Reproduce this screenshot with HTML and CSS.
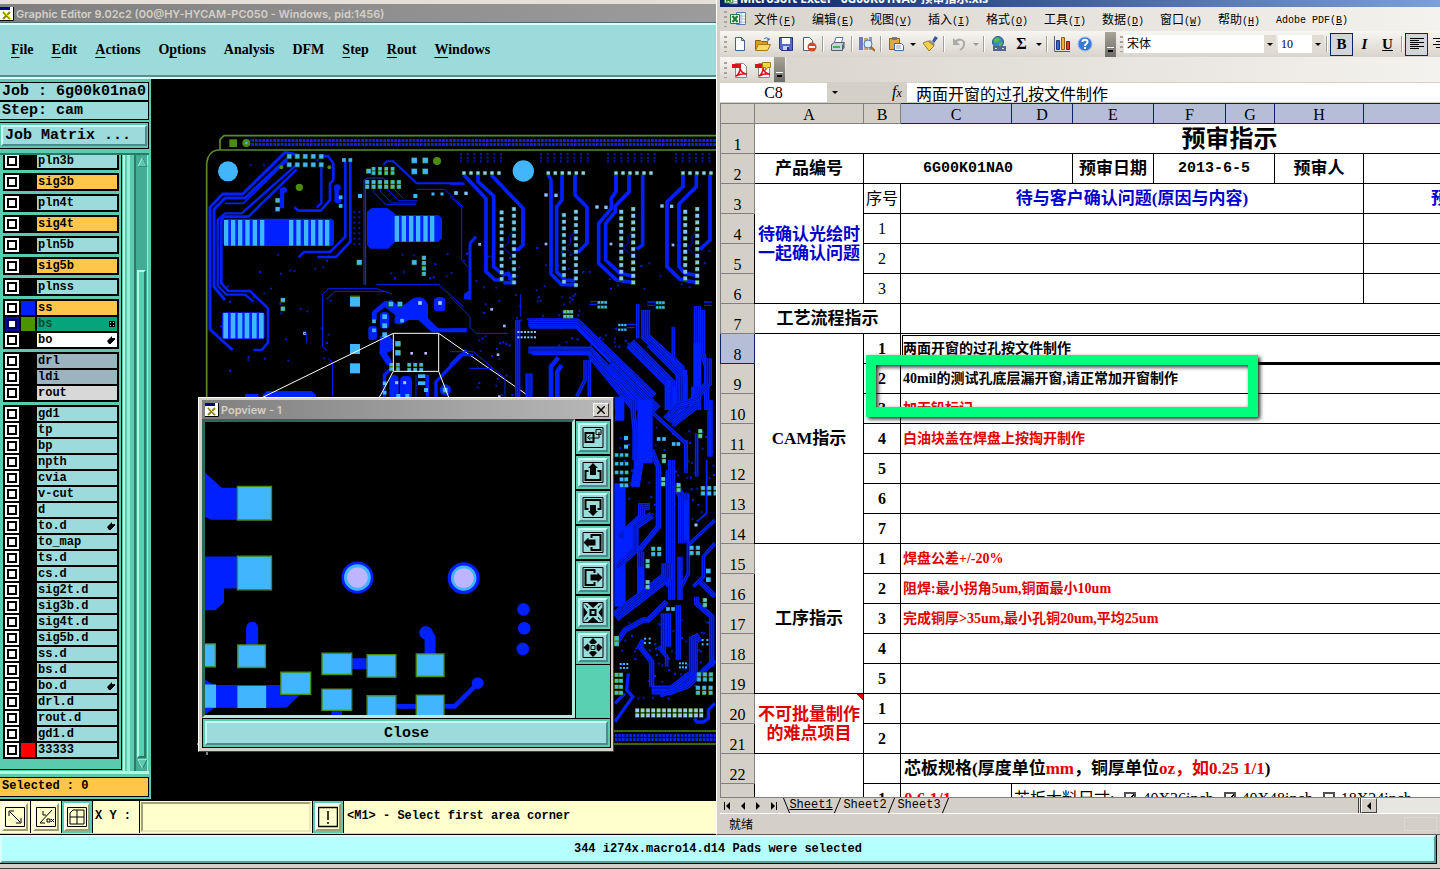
FILE: index.html
```html
<!DOCTYPE html>
<html lang="zh-CN">
<head>
    <meta charset="UTF-8">
    <meta name="viewport" content="width=device-width, initial-scale=1.0">
    <title>Graphic Editor</title>
    <link rel="stylesheet" href="styles.css">
</head>
<body>
    <svg width="0" height="0" class="defs">
        <symbol id="xlogo" viewBox="0 0 14 14"><path fill="#fff" d="M0 0h14v14H0z"/><path fill="#000080" d="M0 0h10v3H0z"/><path d="M3 5l7 7M10 5l-7 7" stroke="#8c8c00" stroke-width="2"/><path d="M4 5l7 7" stroke="#e0e000"/><path d="M13.500 0v13.500H0" stroke="#000" fill="none"/></symbol>
        <symbol id="hand" viewBox="0 0 8 8"><path d="M0 5l2-2 3-3v2h3v2H7v1H6v1H5v1H4v1H2z"/></symbol>
        <symbol id="excel" viewBox="0 0 16 16"><path fill="#fff" stroke="#5a7bb0" d="M6.500 1.500h9v12h-9z"/><path stroke="#9db4d4" d="M11 2v11M7 5h8M7 8h8M7 11h8"/><path fill="#eaf4ea" stroke="#2c7a3a" d="M.5 3.500h9v9h-9z"/><path d="M2.500 5l5 6M7.500 5l-5 6" stroke="#1b7a2c" stroke-width="2"/></symbol>
        <symbol id="pdf" viewBox="0 0 16 16"><path fill="#fff" stroke="#888" d="M3.500 1.500h8l3 3v11h-11z"/><path fill="#d8141c" d="M0 2h9v4H0z"/><path d="M4 14c3-2 4-5 4-8 1 4 3 6 7 6-4-1-7 0-11 2z" fill="none" stroke="#d8141c" stroke-width="1.500"/></symbol>
    </svg>

    <div class="editor">
        <div class="titlebar"><svg class="logo"><use href="#xlogo"/></svg>Graphic Editor 9.02c2 (00@HY-HYCAM-PC050 - Windows, pid:1456)</div>
        <nav class="menubar">
            <a href="#"><u>F</u>ile</a>
            <a href="#"><u>E</u>dit</a>
            <a href="#"><u>A</u>ctions</a>
            <a href="#">O<u>p</u>tions</a>
            <a href="#">Analysis</a>
            <a href="#">DFM</a>
            <a href="#"><u>S</u>tep</a>
            <a href="#"><u>R</u>out</a>
            <a href="#"><u>W</u>indows</a>
        </nav>

        <div class="main">
            <div class="sidebar">
                <div class="info">Job : 6g00k01na0</div>
                <div class="info">Step: cam</div>
                <div class="matrix"><button type="button" class="bevel">Job Matrix ...</button></div>
                <div class="layers">
                    <div class="list">
                        <div class="group"><label><input type="checkbox"><i></i><span>pln3b</span></label></div>
                        <div class="group"><label><input type="checkbox"><i></i><span class="sig">sig3b</span></label></div>
                        <div class="group"><label><input type="checkbox"><i></i><span>pln4t</span></label></div>
                        <div class="group"><label><input type="checkbox"><i></i><span class="sig">sig4t</span></label></div>
                        <div class="group"><label><input type="checkbox"><i></i><span>pln5b</span></label></div>
                        <div class="group"><label><input type="checkbox"><i></i><span class="sig">sig5b</span></label></div>
                        <div class="group"><label><input type="checkbox"><i></i><span>plnss</span></label></div>
                        <div class="group">
                            <label><input type="checkbox"><i class="blue"></i><span class="sig">ss</span></label>
                            <label><input type="checkbox" checked><i class="green"></i><span class="work">bs<svg viewBox="0 0 6 6"><path d="M0 0h6v6H0z"/><path fill="#9fd" d="M1 1h1v1H1zM4 1h1v1H4zM1 4h1v1H1zM4 4h1v1H4z"/></svg></span></label>
                            <label><input type="checkbox"><i></i><span class="doc">bo<svg><use href="#hand"/></svg></span></label>
                        </div>
                        <div class="group">
                            <label><input type="checkbox"><i></i><span class="drill">drl</span></label>
                            <label><input type="checkbox"><i></i><span class="drill">ldi</span></label>
                            <label><input type="checkbox"><i></i><span class="rout">rout</span></label>
                        </div>
                        <div class="group">
                            <label><input type="checkbox"><i></i><span>gd1</span></label>
                            <label><input type="checkbox"><i></i><span>tp</span></label>
                            <label><input type="checkbox"><i></i><span>bp</span></label>
                            <label><input type="checkbox"><i></i><span>npth</span></label>
                            <label><input type="checkbox"><i></i><span>cvia</span></label>
                            <label><input type="checkbox"><i></i><span>v-cut</span></label>
                            <label><input type="checkbox"><i></i><span>d</span></label>
                            <label><input type="checkbox"><i></i><span>to.d<svg><use href="#hand"/></svg></span></label>
                            <label><input type="checkbox"><i></i><span>to_map</span></label>
                            <label><input type="checkbox"><i></i><span>ts.d</span></label>
                            <label><input type="checkbox"><i></i><span>cs.d</span></label>
                            <label><input type="checkbox"><i></i><span>sig2t.d</span></label>
                            <label><input type="checkbox"><i></i><span>sig3b.d</span></label>
                            <label><input type="checkbox"><i></i><span>sig4t.d</span></label>
                            <label><input type="checkbox"><i></i><span>sig5b.d</span></label>
                            <label><input type="checkbox"><i></i><span>ss.d</span></label>
                            <label><input type="checkbox"><i></i><span>bs.d</span></label>
                            <label><input type="checkbox"><i></i><span>bo.d<svg><use href="#hand"/></svg></span></label>
                            <label><input type="checkbox"><i></i><span>drl.d</span></label>
                            <label><input type="checkbox"><i></i><span>rout.d</span></label>
                            <label><input type="checkbox"><i></i><span>gd1.d</span></label>
                            <label><input type="checkbox"><i class="red"></i><span>33333</span></label>
                        </div>
                    </div>
                    <div class="rail"></div>
                    <div class="scroll">
                        <svg viewBox="0 0 12 12"><path d="M6 1l5 10H1z" fill="#5acbae" stroke="#b5f5e2"/><path d="M6 1l5 10H1" fill="none" stroke="#2a7a68"/></svg>
                        <div class="thumb"></div>
                        <svg viewBox="0 0 12 12"><path d="M6 11L1 1h10z" fill="#5acbae" stroke="#2a7a68"/><path d="M11 1H1l5 10" fill="none" stroke="#b5f5e2"/></svg>
                    </div>
                </div>
                <div class="selected">Selected : 0</div>
            </div>
            <svg class="board" id="board" viewBox="151 79 565 722" width="565" height="722"></svg>
        </div>

        <div class="command">
            <button type="button" class="tool" aria-label="Diagonal"><svg viewBox="0 0 20 20"><path d="M.5.5h19v19H.5zM5 5l10 10M4 9V4h5M16 11v5h-5"/></svg></button>
            <button type="button" class="tool" aria-label="Angle"><svg viewBox="0 0 20 20"><path d="M.5.5h19v19H.5zM4 16L16 3M4 16h5M7 4v4h3M11 12h3v3h-3zM15 12l3 3M18 12l-3 3"/></svg></button>
            <button type="button" class="tool on" aria-label="Grid"><svg viewBox="0 0 20 20"><path d="M.5.5h19v19H.5zM3 17V6l3-3h11v14zM10 3v14M3 10h14"/></svg></button>
            <label class="xy" for="xy">X Y :</label>
            <input type="text" id="xy" class="xyinput">
            <button type="button" class="tool on" aria-label="Alert"><svg viewBox="0 0 20 20"><path d="M.5.5h19v19H.5zM10 4v9M10 15v2" stroke-width="1.500"/></svg></button>
            <div class="message">&lt;M1&gt; - Select first area corner</div>
        </div>
        <div class="status">344 i274x.macro14.d14 Pads were selected</div>
    </div>

    <div class="popview">
        <div class="titlebar"><svg class="logo"><use href="#xlogo"/></svg>Popview - 1<button type="button" class="x" aria-label="Close window"><svg viewBox="0 0 8 8"><path d="M0 0l8 8M8 0L0 8" stroke="#000" stroke-width="1.500"/></svg></button></div>
        <div class="popbody">
            <svg class="popcanvas" viewBox="30 84 1098 882" preserveAspectRatio="none">
                <path fill="#0020ff" d="M30 236l50 46h50v96H48l-18-8zM30 489h100v96H87v42l-26 24H30zM153 755v-52a18 18 0 0 1 36 0v52zM470 795h46v33h-46zM687 782v-44a20 20 0 1 1 22-28l11 20v52zM602 933h60v14h-60zM746 933h28l62-62 10 10-66 66h-34zM60 876h200v-6l60 30-46 44H60zM30 860l35 20v60l-35 25zM408 953h32v14h-32z"/>
                <g fill="#0020ff"><circle cx="486" cy="552" r="48"/><circle cx="804" cy="554" r="48"/><circle cx="983" cy="648" r="19"/><circle cx="985" cy="705" r="19"/><circle cx="981" cy="767" r="19"/><circle cx="846" cy="870" r="18"/></g>
                <g fill="#42b5ff"><circle cx="486" cy="552" r="40"/><circle cx="804" cy="554" r="38"/></g>
                <g fill="#bdb5ff"><circle cx="486" cy="552" r="31"/><circle cx="804" cy="554" r="30"/></g>
                <g fill="#42b5ff" stroke="#4a8c10" stroke-width="4">
                    <path d="M127 278h102v101H127zM127 488h102v101H127zM20 752h41v69H20zM128 755h83v68h-83zM257 837h89v67h-89zM380 780h89v64h-89zM515 784h86v68h-86zM662 782h83v68h-83zM380 888h89v64h-89zM515 908h86v70h-86zM662 906h83v70h-83z"/>
                </g>
                <path fill="#42b5ff" d="M30 874h33v70H30zM127 878h86v67h-86z"/>
            </svg>
            <div class="poptools">
                <button type="button" aria-label="Pop area"><svg viewBox="0 0 21 21"><path d="M.5.5h20v20H.500z"/><path stroke-width="2" d="M3 6h8v9H3z"/><path d="M13.500 2.500h5v5h-5zM16.500 5v6H6M8 8l-3 2.500 3 2.500"/></svg></button>
                <button type="button" aria-label="Pan up"><svg viewBox="0 0 21 21"><path d="M.5.5h20v20H.500z"/><path stroke-width="2" d="M6 9H3v9h15V9h-3"/><path class="f" d="M10.500 1l5 5h-2v7h-6V6h-2z"/></svg></button>
                <button type="button" aria-label="Pan down"><svg viewBox="0 0 21 21"><path d="M.5.5h20v20H.500z"/><path stroke-width="2" d="M6 12H3V3h15v9h-3"/><path class="f" d="M10.500 19l5-5h-2V8h-6v6h-2z"/></svg></button>
                <button type="button" aria-label="Pan left"><svg viewBox="0 0 21 21"><path d="M.5.5h20v20H.500z"/><path stroke-width="2" d="M9 6V3h9v15H9v-3"/><path class="f" d="M1 10.500l5-5v2h7v6H6v2z"/></svg></button>
                <button type="button" aria-label="Pan right"><svg viewBox="0 0 21 21"><path d="M.5.5h20v20H.500z"/><path stroke-width="2" d="M12 6V3H3v15h9v-3"/><path class="f" d="M20 10.500l-5-5v2H8v6h7v2z"/></svg></button>
                <button type="button" aria-label="Zoom in"><svg viewBox="0 0 21 21"><path d="M.5.5h20v20H.500z"/><path stroke-width="2" d="M8 8h5v5H8z"/><path class="f" d="M5 1h11l-5.500 5zM5 20h11l-5.500-5zM1 5v11l4-5.500zM20 5v11l-4-5.500zM1 1l5 4-1 1zM20 1l-5 4 1 1zM1 20l5-4-1-1zM20 20l-5-4 1-1z"/></svg></button>
                <button type="button" aria-label="Zoom out"><svg viewBox="0 0 21 21"><path d="M.5.5h20v20H.500z"/><path stroke-width="1" d="M8.500 8.500h4v4h-4z"/><path class="f" d="M10.500 1l4 4-2 2h-4l-2-2zM10.500 20l4-4-2-2h-4l-2 2zM1 10.500l4-4 2 2v4l-2 2zM20 10.500l-4-4-2 2v4l2 2z"/></svg></button>
            </div>
        </div>
        <div class="popclose"><button type="button" class="bevel">Close</button></div>
    </div>

    <div class="excel">
        <div class="xltitle"><svg class="logo"><use href="#excel"/></svg>Microsoft Excel - 6G00K01NA0-预审指示.xls</div>
        <nav class="xlmenu">
            <span class="grip"></span>
            <svg class="logo"><use href="#excel"/></svg>
            <a href="#">文件<span>(<u>F</u>)</span></a>
            <a href="#">编辑<span>(<u>E</u>)</span></a>
            <a href="#">视图<span>(<u>V</u>)</span></a>
            <a href="#">插入<span>(<u>I</u>)</span></a>
            <a href="#">格式<span>(<u>O</u>)</span></a>
            <a href="#">工具<span>(<u>T</u>)</span></a>
            <a href="#">数据<span>(<u>D</u>)</span></a>
            <a href="#">窗口<span>(<u>W</u>)</span></a>
            <a href="#">帮助<span>(<u>H</u>)</span></a>
            <a href="#"><span>Adobe PDF(<u>B</u>)</span></a>
        </nav>
        <div class="toolbar">
            <span class="grip"></span>
            <button type="button" aria-label="新建"><svg viewBox="0 0 16 16"><path fill="#fff" stroke="#46608c" d="M3.500 1.500h6l3 3v10h-9z"/><path fill="#b8cbe8" stroke="#46608c" d="M9.500 1.500v3h3z"/></svg></button>
            <button type="button" aria-label="打开"><svg viewBox="0 0 16 16"><path fill="#d89c28" stroke="#8a6010" d="M.5 13.500v-9h5l1 1h6v3"/><path fill="#ffd868" stroke="#a87818" d="M.5 14.500l3-6h12l-3 6z"/><path fill="none" stroke="#2c58a8" d="M9 3c2-2 4-1 5 1M12 4h2V2"/></svg></button>
            <button type="button" aria-label="保存"><svg viewBox="0 0 16 16"><path fill="#5868c8" stroke="#283080" d="M1.500 1.500h13v13h-11l-2-2z"/><path fill="#fff" d="M4 2h8v6H4z"/><path fill="#c8d0f0" d="M5 10h6v4H5z"/><path fill="#283080" d="M9 11h2v3H9z"/></svg></button>
            <button type="button" aria-label="权限"><svg viewBox="0 0 16 16"><path fill="#fff" stroke="#46608c" d="M2.500 1.500h6l3 3v10h-9z"/><circle cx="11" cy="11" r="4.500" fill="#d84820"/><path fill="#fff" d="M8 10h6v2H8z"/></svg></button>
            <span class="sep"></span>
            <button type="button" aria-label="打印"><svg viewBox="0 0 16 16"><path fill="#fff" stroke="#5878a8" d="M6 1.500h7l-2 6H4z"/><path fill="#c8d4dc" stroke="#506070" d="M1.500 8.500l3-2h10l-2 3v5h-11z"/><path fill="#48b058" d="M3 10h7v2H3z"/><path fill="#506878" d="M12.500 9l2-2v5l-2 2z"/></svg></button>
            <span class="sep"></span>
            <button type="button" aria-label="信息检索"><svg viewBox="0 0 16 16"><path fill="#6c7cc0" d="M0 1h4v13H0z"/><path fill="#c8a868" d="M5 2h4v12H5z"/><path fill="#9098c8" d="M10 1h3v13h-3z"/><circle cx="9" cy="8" r="4" fill="#d8f0ff" stroke="#5078a0"/><path d="M12 11l4 4" stroke="#a06820" stroke-width="2"/></svg></button>
            <span class="sep"></span>
            <button type="button" aria-label="粘贴"><svg viewBox="0 0 16 16"><path fill="#e0a840" stroke="#906010" d="M1.500 2.500h10v11h-10z"/><path fill="#787878" d="M4 1h5v3H4z"/><path fill="#fff" stroke="#4868a0" d="M6.500 7.500h7l2 2v5h-9z"/><path stroke="#88a0c8" d="M8 10h5M8 12h5"/></svg></button>
            <button type="button" class="drop" aria-label="粘贴选项"></button>
            <button type="button" aria-label="格式刷"><svg viewBox="0 0 16 16"><path fill="#3858a0" d="M13 0l3 2-4 5-2-2z"/><path fill="#909090" d="M8 4l5 4-1 2-6-5z"/><path fill="#f0d050" stroke="#a08020" d="M6 5l6 5-5 5-6-8z"/></svg></button>
            <span class="sep"></span>
            <button type="button" aria-label="撤消"><svg viewBox="0 0 16 16"><path fill="none" stroke="#aaa" stroke-width="2" d="M3 7c5-6 11-3 10 2 0 3-3 4-4 5"/><path fill="#aaa" d="M2 2v7h7z"/></svg></button>
            <button type="button" class="drop off" aria-label="撤消列表"></button>
            <span class="sep"></span>
            <button type="button" aria-label="超链接"><svg viewBox="0 0 16 16"><circle cx="7" cy="6" r="5.500" fill="#3888c8" stroke="#205890"/><path fill="#58b848" d="M3 3l4-2 2 3-3 3-3-1zM8 7l4-1-2 4H8z"/><path fill="none" stroke="#506890" stroke-width="2" d="M3 11h4v3H3zM9 11h5v3H9zM6 12.500h5"/></svg></button>
            <button type="button" class="sum" aria-label="自动求和">Σ</button>
            <button type="button" class="drop" aria-label="求和选项"></button>
            <span class="sep"></span>
            <button type="button" aria-label="图表"><svg viewBox="0 0 16 16"><path fill="none" stroke="#506080" d="M.5 0v15.500H16"/><path fill="#3868c8" stroke="#203c80" d="M2.500 4.500h3v9h-3z"/><path fill="#f0b030" stroke="#906010" d="M7.500 1.500h3v12h-3z"/><path fill="#d84028" stroke="#801c10" d="M12.500 5.500h3v8h-3z"/></svg></button>
            <button type="button" aria-label="帮助"><svg viewBox="0 0 16 16"><circle cx="8" cy="8" r="7" fill="#3878d8" stroke="#9cc0f0"/><path fill="none" stroke="#fff" stroke-width="2" d="M5.500 6c0-3 5-3 5 0 0 2-2.500 1.500-2.500 4M8 11v2"/></svg></button>
            <button type="button" class="more wide" aria-label="工具栏选项"></button>
            <span class="grip"></span>
            <span class="combo font"><select aria-label="字体"><option>宋体</option></select></span>
            <span class="combo size"><select aria-label="字号"><option>10</option></select></span>
            <span class="sep"></span>
            <button type="button" class="fmt pressed"><b>B</b></button>
            <button type="button" class="fmt"><em>I</em></button>
            <button type="button" class="fmt"><u>U</u></button>
            <span class="sep"></span>
            <button type="button" class="fmt pressed" aria-label="左对齐"><svg viewBox="0 0 16 16"><path stroke="#000" d="M1 2.500h14M1 4.500h9M1 6.500h14M1 8.500h9M1 10.500h14M1 12.500h9"/></svg></button>
            <button type="button" class="fmt" aria-label="居中"><svg viewBox="0 0 16 16"><path stroke="#000" d="M1 2.500h14M4 5.500h8M1 8.500h14M4 11.500h8"/></svg></button>
        </div>
        <div class="pdfrow">
            <div class="toolbar short">
                <span class="grip"></span>
                <button type="button" aria-label="转换为 PDF"><svg><use href="#pdf"/></svg></button>
                <button type="button" aria-label="转换并注释"><svg viewBox="0 0 16 16"><use href="#pdf"/><path fill="#f8d838" stroke="#a08010" d="M7.500.500h8v5h-3l-2 3v-3h-3z"/></svg></button>
                <button type="button" class="more" aria-label="工具栏选项"></button>
            </div>
        </div>
        <div class="formula">
            <input type="text" class="name" value="C8" aria-label="名称框">
            <button type="button" class="drop" aria-label="名称列表"></button>
            <em class="fx">f<small>x</small></em>
            <input type="text" class="value" value="两面开窗的过孔按文件制作" aria-label="编辑栏">
        </div>

        <div class="sheet">
            <table>
                <colgroup><col class="rh"><col class="a"><col class="b"><col class="c"><col class="d"><col class="e"><col class="f"><col class="g"><col class="h"><col class="i"></colgroup>
                <tr class="head"><th></th><th>A</th><th>B</th><th class="on">C</th><th class="on">D</th><th class="on">E</th><th class="on">F</th><th class="on">G</th><th class="on">H</th><th class="on"></th></tr>
                <tr><th>1</th><td colspan="9" class="title">预审指示</td></tr>
                <tr><th>2</th><td class="label">产品编号</td><td colspan="3" class="code">6G00K01NA0</td><td class="label">预审日期</td><td colspan="2" class="code">2013-6-5</td><td class="label">预审人</td><td></td></tr>
                <tr><th>3</th><td rowspan="4" class="label blue">待确认光绘时<br>一起确认问题</td><td class="no">序号</td><td colspan="6" class="label blue">待与客户确认问题(原因与内容)</td><td class="label blue next">预</td></tr>
                <tr><th>4</th><td class="no">1</td><td colspan="6"></td><td></td></tr>
                <tr><th>5</th><td class="no">2</td><td colspan="6"></td><td></td></tr>
                <tr><th>6</th><td class="no">3</td><td colspan="6"></td><td></td></tr>
                <tr><th>7</th><td colspan="2" class="label">工艺流程指示</td><td colspan="7"></td></tr>
                <tr><th class="on">8</th><td rowspan="7" class="label">CAM指示</td><td class="no bold">1</td><td colspan="7" class="note current">两面开窗的过孔按文件制作</td></tr>
                <tr><th>9</th><td class="no bold">2</td><td colspan="7" class="note">40mil的测试孔底层漏开窗,请正常加开窗制作</td></tr>
                <tr><th>10</th><td class="no bold">3</td><td colspan="7" class="note red">加无铅标记</td></tr>
                <tr><th>11</th><td class="no bold">4</td><td colspan="7" class="note red">白油块盖在焊盘上按掏开制作</td></tr>
                <tr><th>12</th><td class="no bold">5</td><td colspan="7"></td></tr>
                <tr><th>13</th><td class="no bold">6</td><td colspan="7"></td></tr>
                <tr><th>14</th><td class="no bold">7</td><td colspan="7"></td></tr>
                <tr><th>15</th><td rowspan="5" class="label">工序指示</td><td class="no bold">1</td><td colspan="7" class="note red">焊盘公差+/-20%</td></tr>
                <tr><th>16</th><td class="no bold">2</td><td colspan="7" class="note red">阻焊:最小拐角5um,铜面最小10um</td></tr>
                <tr><th>17</th><td class="no bold">3</td><td colspan="7" class="note red">完成铜厚&gt;35um,最小孔铜20um,平均25um</td></tr>
                <tr><th>18</th><td class="no bold">4</td><td colspan="7"></td></tr>
                <tr><th>19</th><td class="no bold">5</td><td colspan="7"></td></tr>
                <tr><th>20</th><td rowspan="2" class="label red comment">不可批量制作<br>的难点项目</td><td class="no bold">1</td><td colspan="7"></td></tr>
                <tr><th>21</th><td class="no bold">2</td><td colspan="7"></td></tr>
                <tr><th>22</th><td rowspan="2"></td><td></td><td colspan="7" class="spec">芯板规格(厚度单位<span class="red">mm</span>，铜厚单位<span class="red">oz，如0.25 1/1</span>)</td></tr>
                <tr><th></th><td class="no bold">1</td><td class="spec red">0.6 1/1</td><td colspan="6" class="sizes">芯板大料尺寸:
                    <label><input type="checkbox" checked>40X36inch</label>
                    <label><input type="checkbox" checked>40X48inch</label>
                    <label><input type="checkbox">18X24inch</label></td></tr>
            </table>
        </div>

        <div class="tabs">
            <button type="button" class="nav" aria-label="第一张"><svg viewBox="0 0 8 8"><path d="M0 0h1v8H0zM6 0v8L2 4z"/></svg></button>
            <button type="button" class="nav" aria-label="上一张"><svg viewBox="0 0 8 8"><path d="M6 0v8L2 4z"/></svg></button>
            <button type="button" class="nav" aria-label="下一张"><svg viewBox="0 0 8 8"><path d="M2 0v8l4-4z"/></svg></button>
            <button type="button" class="nav" aria-label="最后一张"><svg viewBox="0 0 8 8"><path d="M2 0v8l4-4zM7 0h1v8H7z"/></svg></button>
            <button type="button" class="tab active">Sheet1</button>
            <button type="button" class="tab">Sheet2</button>
            <button type="button" class="tab">Sheet3</button>
            <div class="hscroll"><button type="button" aria-label="向左滚动"><svg viewBox="0 0 8 8"><path d="M6 0v8L2 4z"/></svg></button></div>
        </div>
        <div class="xlstatus"><span>就绪</span><i></i></div>
    </div>

    <div class="marker"></div>

    <script src="board.js"></script>
</body>
</html>
```

FILE: styles.css
```css
* {
    box-sizing: border-box;
}
body {
    margin: 0;
    height: 100vh;
    overflow: hidden;
    position: relative;
    background-color: #000;
    font-family: "Liberation Mono", monospace;
    font-size: 12px;
    color: #000;
}
a {
    color: inherit;
    text-decoration: none;
}
button, input, select {
    font: inherit;
    color: inherit;
    border: 0;
    padding: 0;
    margin: 0;
    border-radius: 0;
    background: none;
}
svg {
    display: block;
}
.defs {
    position: absolute;
}
.logo {
    width: 14px;
    height: 14px;
    flex: none;
    margin-right: 2px;
}

/* graphic editor */
.editor {
    height: 100%;
    display: flex;
    flex-direction: column;
    border-top: 4px solid #e4e0d8;
    border-bottom: 1px solid #404040;
    background-color: #d4d0c8;
}
.titlebar {
    flex: none;
    display: flex;
    align-items: center;
    height: 19px;
    font: 600 11px Inter, "Noto Sans", sans-serif;
    color: #d4d0c8;
    background: linear-gradient(90deg, #808080, #b8b8b8);
}
.menubar {
    flex: none;
    display: flex;
    align-items: center;
    gap: 18px;
    height: 56px;
    padding: 0 0 3px 11px;
    font: bold 14px "Liberation Serif", serif;
    background-color: #9cdbdb;
    border-top: 2px solid #d8ffff;
    border-bottom: 2px solid #d8ffff;
    box-shadow: inset 0 -2px #5a8c8c, 0 -1px #4a6c6c;
}
.menubar u {
    text-underline-offset: 3px;
}
.main {
    flex: 1;
    min-height: 0;
    display: flex;
    background-color: #000;
}
.sidebar {
    width: 151px;
    flex: none;
    display: flex;
    flex-direction: column;
    padding: 3px 2px 2px 0;
    margin-bottom: 2px;
    background-color: #5acbae;
}
.info {
    height: 19px;
    padding-left: 2px;
    font-size: 15px;
    line-height: 17px;
    font-weight: bold;
    white-space: nowrap;
    background-color: #9cdbdb;
    border: 1px solid #000;
    border-left: 0;
}
.matrix {
    margin: 2px 0 4px;
    padding: 2px 1px;
    height: 27px;
    border: 1px solid #000;
    border-left: 0;
}
.bevel {
    display: block;
    width: 100%;
    height: 100%;
    font-size: 15px;
    font-weight: bold;
    background-color: #9cdbdb;
    border: 2px solid;
    border-color: #c8fff4 #4a8c8c #4a8c8c #c8fff4;
}
.matrix .bevel {
    text-align: left;
    padding-left: 2px;
    line-height: 17px;
}
.layers {
    flex: 1;
    min-height: 0;
    display: flex;
    border-top: 2px solid #2a7a68;
    border-bottom: 3px solid #b5f5e2;
}
.list {
    width: 122px;
    display: flex;
    flex-direction: column;
    justify-content: flex-end;
    gap: 3px;
    padding: 0 2px 10px 3px;
    margin-bottom: 1px;
    overflow: hidden;
    border-right: 1px solid #000;
    border-bottom: 1px solid #000;
}
.group {
    flex: none;
    display: flex;
    flex-direction: column;
    gap: 2px;
    padding: 2px;
    background-color: #000;
}
.group label {
    display: flex;
    gap: 2px;
    height: 14px;
}
.group input {
    appearance: none;
    width: 14px;
    height: 14px;
    background-color: #fff;
    border: 2px solid #fff;
    box-shadow: inset 0 0 0 2px #000;
}
.group input:checked {
    border-color: #0808a0;
    box-shadow: inset 0 0 0 2px #000060;
}
.group i {
    width: 14px;
    background-color: #000;
}
.group i.blue {
    background-color: #0020ff;
}
.group i.green {
    background-color: #4a9400;
}
.group i.red {
    background-color: #f00;
}
.group span {
    flex: 1;
    display: flex;
    align-items: center;
    justify-content: space-between;
    padding: 0 2px 0 1px;
    line-height: 14px;
    font-weight: bold;
    background-color: #9cdbdb;
}
.group svg {
    width: 8px;
    height: 8px;
}
.group .sig {
    background-color: #ffc64a;
}
.group .work {
    color: #044a30;
    background-color: #04a57b;
}
.group .work svg {
    width: 6px;
    height: 6px;
}
.group .doc {
    background-color: #fff;
}
.group .drill {
    background-color: #9cb4bd;
}
.group .rout {
    background-color: #d8d8d8;
}
.rail {
    width: 7px;
    margin: 0 4px 0 1px;
    border-left: 2px solid #b5f5e2;
    border-right: 3px solid #9cebd6;
}
.scroll {
    width: 14px;
    display: flex;
    flex-direction: column;
    padding: 1px;
    background-color: #42ad94;
    border-left: 2px solid #2a7a68;
    border-right: 1px solid #9cebd6;
}
.scroll svg {
    width: 11px;
    height: 12px;
    flex: none;
}
.scroll .thumb {
    flex: 1;
    margin-top: 102px;
    background-color: #5ad0b2;
    border: 2px solid;
    border-color: #b5f5e2 #2a7a68 #2a7a68 #b5f5e2;
}
.selected {
    flex: none;
    height: 20px;
    margin-top: 3px;
    padding-left: 2px;
    line-height: 17px;
    font-weight: bold;
    background-color: #ffc64a;
    border: 1px solid #000;
    border-left: 0;
}
.board {
    flex: none;
    background-color: #000;
}
.command {
    flex: none;
    display: flex;
    gap: 1px;
    height: 32px;
    font-weight: bold;
    background-color: #000;
}
.tool {
    width: 30px;
    padding: 2px;
    background-color: #ffffce;
}
.tool svg {
    width: 100%;
    height: 100%;
    padding: 1px;
    fill: none;
    stroke: #000;
    background-color: #ffffce;
    border: 2px solid;
    border-color: #fff #9c9c7b #9c9c7b #fff;
}
.tool.on {
    background-color: #5acbae;
}
.xy {
    width: 46px;
    padding-left: 2px;
    line-height: 31px;
    background-color: #ffffce;
}
.xyinput {
    width: 172px;
    background-color: #ffffce;
    border: 3px solid;
    border-color: #a0a080 #e8e8b8 #e8e8b8 #a0a080;
    outline: 1px solid #ffffce;
    outline-offset: -1px;
}
.message {
    flex: 1;
    padding-left: 3px;
    line-height: 31px;
    background-color: #ffffce;
}
.status {
    flex: none;
    height: 28px;
    margin: 2px 4px 5px 0;
    line-height: 24px;
    text-align: center;
    font-weight: bold;
    background-color: #b5ffff;
    border: 2px solid;
    border-color: #d8ffff #5a9c9c #5a9c9c #d8ffff;
    outline: 1px solid #000;
}

/* popview window */
.popview {
    position: absolute;
    left: 198px;
    top: 397px;
    width: 416px;
    height: 355px;
    display: flex;
    flex-direction: column;
    padding: 2px 2px 3px 3px;
    background-color: #d4d0c8;
    border: 1px solid;
    border-color: #fff #404040 #404040 #fff;
}
.x {
    display: flex;
    align-items: center;
    justify-content: center;
    width: 16px;
    height: 14px;
    margin: 0 2px 0 auto;
    background-color: #d4d0c8;
    border: 1px solid;
    border-color: #fff #404040 #404040 #fff;
}
.x svg {
    width: 8px;
    height: 8px;
}
.popview .titlebar {
    padding-left: 3px;
}
.popbody {
    flex: 1;
    min-height: 0;
    display: flex;
    background-color: #000;
}
.popcanvas {
    flex: 1;
    min-width: 0;
    height: 100%;
    background-color: #000;
    border: 3px solid;
    border-color: #2a6a5a #b5ebe0 #b5ebe0 #2a6a5a;
}
.poptools {
    width: 34px;
    display: flex;
    flex-direction: column;
    gap: 2px;
    padding-top: 2px;
    margin: 0 1px;
    background: linear-gradient(#000 246px, #5ad0b2 246px);
}
.poptools button {
    height: 33px;
    padding: 2px;
    background-color: #5acbae;
}
.poptools svg {
    width: 100%;
    height: 100%;
    padding: 2px;
    fill: none;
    stroke: #000;
    background-color: #9cdbdb;
    border: 2px solid;
    border-color: #c8fff4 #4a8c8c #4a8c8c #c8fff4;
}
.poptools .f {
    fill: #000;
    stroke: none;
}
.popclose {
    flex: none;
    height: 30px;
    padding: 2px;
    background-color: #5acbae;
    border: 1px solid #000;
}

/* excel window */
.excel {
    position: absolute;
    left: 716px;
    right: 0;
    top: -13px;
    height: 848px;
    display: flex;
    flex-direction: column;
    padding-left: 3px;
    overflow: hidden;
    font: 12px "Liberation Serif", "Noto Sans CJK SC", serif;
    background-color: #d4d0c8;
    border-left: 1px solid #fff;
    border-bottom: 1px solid #606060;
}
.xltitle {
    flex: none;
    display: flex;
    align-items: center;
    height: 20px;
    padding: 4px 0 0 4px;
    font: bold 12px/16px "Noto Sans", "Noto Sans CJK SC", sans-serif;
    color: #fff;
    background: linear-gradient(90deg, #0a246a, #7ba0d8);
}
.grip {
    width: 3px;
    height: 16px;
    margin: 0 3px 0 4px;
    flex: none;
    background: repeating-linear-gradient(#a8a498 0 2px, transparent 2px 5px);
}
.xlmenu {
    flex: none;
    display: flex;
    align-items: center;
    height: 24px;
    background: linear-gradient(90deg, #d8d4cc, #f4f2ee);
}
.xlmenu .logo {
    width: 16px;
    height: 16px;
    margin-right: 8px;
}
.xlmenu a {
    flex: none;
    width: 58px;
    white-space: nowrap;
}
.xlmenu span {
    font: 10px "Liberation Mono", monospace;
}
.toolbar {
    flex: none;
    display: flex;
    align-items: center;
    height: 26px;
    background: linear-gradient(#f8f6f2, #d8d4cc);
}
.toolbar .grip {
    margin: 0 1px 0 4px;
}
.toolbar button {
    width: 23px;
    height: 23px;
    flex: none;
    display: flex;
    align-items: center;
    justify-content: center;
}
.toolbar svg {
    width: 16px;
    height: 16px;
}
.sep {
    flex: none;
    width: 2px;
    height: 16px;
    margin: 0 2px;
    border-left: 1px solid #a0a098;
    border-right: 1px solid #fff;
}
.toolbar .drop {
    width: 11px;
}
.drop::after, .combo::after {
    content: "";
    border: 3px solid transparent;
    border-top-color: #000;
    border-bottom: 0;
}
.drop.off::after {
    border-top-color: #999;
}
.toolbar .sum {
    font-size: 16px;
    font-weight: bold;
}
.toolbar .more {
    width: 11px;
    height: 25px;
    align-items: flex-end;
    padding-bottom: 3px;
    background: linear-gradient(#a8a498, #6c6c68);
}
.toolbar .more.wide {
    margin-left: 9px;
}
.more::after {
    content: "";
    width: 7px;
    height: 6px;
    border-top: 1px solid #fff;
    background: linear-gradient(#000, #000) center 2px / 5px 2px no-repeat;
}
.combo {
    flex: none;
    display: flex;
    align-items: center;
    height: 18px;
    padding-right: 3px;
    background: linear-gradient(90deg, #fff calc(100% - 12px), #e0dcd4 calc(100% - 12px));
}
.combo select {
    appearance: none;
    flex: 1;
    height: 18px;
    padding-left: 3px;
}
.combo.font {
    width: 152px;
    margin-right: 2px;
}
.combo.size {
    width: 46px;
}
.toolbar .fmt {
    font-size: 15px;
    font-weight: bold;
}
.toolbar .pressed {
    background-color: #d4d5d8;
    border: 1px solid #0a246a;
}
.pdfrow {
    flex: none;
    height: 25px;
    background: linear-gradient(90deg, #d8d4cc, #f4f2ee);
}
.toolbar.short {
    width: 66px;
    height: 25px;
}
.formula {
    flex: none;
    display: flex;
    align-items: center;
    height: 21px;
    font-size: 16px;
}
.formula .name {
    width: 107px;
    height: 19px;
    text-align: center;
    background-color: #fff;
}
.formula .drop {
    display: flex;
    width: 15px;
    justify-content: center;
}
.fx {
    margin: 0 0 0 50px;
    width: 15px;
    line-height: 19px;
}
.fx small {
    font-size: 12px;
}
.formula .value {
    flex: 1;
    min-width: 0;
    height: 19px;
    padding-left: 9px;
    background-color: #fff;
}
.sheet {
    flex: 1;
    min-height: 0;
    overflow: hidden;
    background-color: #fff;
}
table {
    width: 984px;
    table-layout: fixed;
    border-collapse: collapse;
}
tr {
    height: 30px;
}
th, td {
    height: 30px;
    padding: 0;
    overflow: hidden;
    white-space: nowrap;
    border: 1px solid #000;
}
th {
    line-height: 16px;
    font-size: 16px;
    font-weight: normal;
    vertical-align: bottom;
    background-color: #d4d0c8;
    border: 1px solid #808080;
}
.head, .head th {
    height: 20px;
}
th.on {
    background-color: #b5bed6;
    border-color: #0a246a;
}
.rh {
    width: 34px;
}
.a {
    width: 109px;
}
.b {
    width: 37px;
}
.c {
    width: 111px;
}
.d {
    width: 61px;
}
.e {
    width: 81px;
}
.f {
    width: 72px;
}
.g {
    width: 49px;
}
.h {
    width: 89px;
}
.i {
    width: 341px;
}
.title {
    font-size: 24px;
    line-height: 26px;
    font-weight: bold;
    text-align: center;
}
.label {
    font-size: 17px;
    line-height: 19px;
    font-weight: bold;
    text-align: center;
}
.code {
    font: bold 15px "Liberation Mono", monospace;
    text-align: center;
}
.no {
    font-size: 16px;
    line-height: 18px;
    text-align: center;
}
.bold {
    font-weight: bold;
}
.note {
    padding-left: 2px;
    font-size: 14px;
    line-height: 18px;
    font-weight: bold;
}
.current {
    outline: 3px double #000;
    outline-offset: -2px;
}
.blue {
    color: #00c;
}
.red {
    color: #e00000;
}
.next {
    text-align: left;
    padding-left: 67px;
}
.comment {
    background: linear-gradient(45deg, transparent 50%, #e00000 50%) right top / 6px 6px no-repeat;
}
.spec {
    padding-left: 3px;
    font-size: 17px;
    line-height: 20px;
    font-weight: bold;
}
.sizes {
    padding-left: 2px;
    font-size: 16px;
    line-height: 20px;
}
.sizes label {
    margin-left: 6px;
}
.sizes input {
    appearance: none;
    width: 12px;
    height: 12px;
    margin-right: 6px;
    border: 2px solid #505050;
    background-color: #fff;
}
.sizes input:checked {
    background: linear-gradient(135deg, #fff 45%, #000 45% 60%, #fff 60%);
}
.tabs {
    flex: none;
    display: flex;
    height: 17px;
    font: 12px/15px "Liberation Mono", monospace;
    border-top: 1px solid #808080;
    border-bottom: 1px solid #fff;
}
.nav {
    width: 15px;
    display: flex;
    align-items: center;
    justify-content: center;
}
.nav svg, .hscroll svg {
    width: 8px;
    height: 8px;
}
.tab {
    width: 54px;
    position: relative;
}
.tab.active {
    margin-left: 4px;
    text-decoration: underline;
}
.tab::after, .tab.active::before {
    content: "";
    position: absolute;
    top: 0;
    right: 0;
    height: 15px;
    border-left: 1px solid #000;
    transform: skewX(-22deg);
}
.tab.active::before {
    left: 2px;
    right: auto;
    transform: skewX(22deg);
}
.hscroll {
    width: 82px;
    margin-left: auto;
    background-color: #e8e6e0;
    border-left: 3px double #404040;
}
.hscroll button {
    display: flex;
    align-items: center;
    justify-content: center;
    width: 16px;
    height: 15px;
    background-color: #d4d0c8;
    border: 1px solid;
    border-color: #fff #404040 #404040 #fff;
}
.xlstatus {
    flex: none;
    display: flex;
    align-items: center;
    justify-content: space-between;
    height: 20px;
    padding: 0 3px 0 9px;
}
.xlstatus i {
    width: 33px;
    height: 14px;
    border: 1px solid #dedad2;
}

/* highlight drawn over the sheet */
.marker {
    position: absolute;
    left: 866px;
    top: 355px;
    width: 392px;
    height: 62px;
    border: 10px solid #00ff7b;
    box-shadow: 2px 2px 4px #222, inset 2px 2px 4px #222;
}
```

FILE: board.js
```javascript
const BLUE = '#0020ff';
const DARK = '#0818a8';
const LIGHT = '#42b5ff';
const GREEN = '#4a8c10';
const board = document.getElementById('board');
let out = '';

function trace(d, w, color) {
    out += `<path d="${d}" fill="none" stroke="${color || BLUE}" stroke-width="${w || 9}"/>`;
}
function shape(d, color) {
    out += `<path d="${d}" fill="${color || BLUE}"/>`;
}
function rect(x, y, w, h, color) {
    out += `<rect x="${x}" y="${y}" width="${w}" height="${h}" fill="${color || BLUE}"/>`;
}
function circle(x, y, r, color) {
    out += `<circle cx="${x}" cy="${y}" r="${r}" fill="${color}"/>`;
}
// n parallel tracks following one centre line
function bundle(d, n, w) {
    w = w || 3;
    for (let k = n; k > 0; k--) {
        const blue = k % 2 === n % 2;
        trace(d, (4 * k - 2) * w / 1.5 + (blue ? 3 : -1), blue ? BLUE : '#000030');
    }
}
function pads(x, y, cols, rows, dx, dy, s, color, ring) {
    for (let r = 0; r < rows; r++) {
        for (let c = 0; c < cols; c++) {
            const px = x + c * dx - s / 2;
            const py = y + r * dy - s / 2;
            if (ring) rect(px - 2, py - 1, s + 3, s + 3, ring);
            rect(px, py, s, s, color || LIGHT);
        }
    }
}
// every view is drawn in thirds of a pixel
function open(x, y) {
    out += `<g transform="translate(${x} ${y}) scale(.33333)">`;
}
function close() {
    out += '</g>';
}
let seed = 7;
function rnd() {
    seed = (seed * 16807) % 2147483647;
    return seed / 2147483647;
}
function vias(x, y, w, h, n) {
    for (let i = 0; i < n; i++) {
        rect(Math.round(x + rnd() * w), Math.round(y + rnd() * h), 6, 6, rnd() > 0.4 ? DARK : BLUE);
    }
}

out += '<defs><pattern id="strip" width="11" height="12" patternUnits="userSpaceOnUse" y="57"><rect width="8" height="9" fill="#0828e0"/></pattern></defs>';

// upper left
open(200, 120);
trace('M60 90V58L72 47H1600M52 90H1600M20 1880V130Q24 94 52 90', 5, '#5a8a32');
rect(150, 57, 1400, 23, 'url(#strip)');
rect(88, 58, 23, 23, GREEN);
circle(139, 69, 12, GREEN);
circle(139, 69, 4, LIGHT);
vias(80, 110, 330, 30, 6);
vias(60, 400, 350, 350, 34);
vias(560, 380, 200, 100, 12);
trace('M295 105L255 97L128 222H68L30 262V628L98 690');
trace('M265 112L135 234H75L42 268V500L75 540');
trace('M290 134L125 280H75L53 300V498L80 524H135L160 545', 7);
trace('M290 148L145 290H72L64 302V490L85 513H150L204 565V668L185 690H160', 8);
trace('M262 122L130 250H75', 5);
trace('M370 108L384 108L400 130V180L390 190V240L362 272H295L283 262', 8);
trace('M364 140V250L350 262', 7);
trace('M436 125V350L390 396H312L296 412', 8);
trace('M451 125V365L408 411H352', 8);
trace('M246 205V265M410 200V245', 13);
circle(252, 210, 9, BLUE);
circle(412, 203, 10, BLUE);
circle(414, 240, 10, BLUE);
out += '<rect x="70" y="296" width="332" height="82" rx="10" fill="#0020ff"/>';
[72, 93, 114, 136, 158, 180, 267, 289, 312, 333, 355, 375].forEach(x => rect(x, 300, 13, 77, LIGHT));
out += '<rect x="66" y="577" width="128" height="80" rx="8" fill="#0020ff"/>';
[70, 92, 113, 134, 156, 177].forEach(x => rect(x, 579, 14, 76, LIGHT));
shape('M501 275L515 264H562L590 285H715L726 295V355L715 366H585L565 386H510L501 375z');
[584, 605, 627, 648, 670, 690].forEach(x => rect(x, 288, 13, 77, LIGHT));
pads(268, 109, 5, 2, 24, 25, 12, LIGHT, '#186830');
pads(432, 120, 2, 1, 19, 1, 11, LIGHT);
pads(463, 276, 2, 7, 15, 16, 6, DARK);
trace('M492 495V180L502 174H550L560 184M497 495V205', 3, '#2038c0');
trace('M550 135L560 124H580L650 190H790', 6);
trace('M530 494H716L790 560M650 208H734L790 262M368 680V522L385 506H530L575 522M380 538L405 514H560M368 680L382 692M384 715L398 728V830', 3);
trace('M522 205V218L557 253H648M541 205V214L575 249H650M560 205L595 242H652M580 205L610 235', 3);
pads(506, 153, 1, 1, 1, 1, 12, LIGHT, GREEN);
pads(521, 146, 4, 2, 19, 13, 9, LIGHT, GREEN);
pads(502, 186, 6, 2, 19, 14, 10, LIGHT, GREEN);
pads(643, 121, 2, 2, 33, 33, 15, LIGHT, '#186830');
pads(480, 228, 1, 1, 1, 1, 12);
pads(646, 228, 1, 1, 1, 1, 12);
pads(699, 222, 2, 1, 27, 1, 9);
pads(768, 219, 1, 1, 1, 1, 10);
pads(478, 427, 1, 1, 1, 1, 14, LIGHT, '#186830');
pads(643, 427, 1, 1, 1, 1, 13, LIGHT, '#186830');
pads(672, 413, 1, 4, 1, 16, 10, LIGHT, GREEN);
circle(711, 123, 12, GREEN);
circle(298, 202, 11, GREEN);
circle(244, 142, 6, GREEN);
circle(388, 142, 6, GREEN);
circle(84, 154, 30, LIGHT);
pads(233, 241, 1, 2, 1, 26, 11, LIGHT, GREEN);
pads(422, 232, 1, 2, 1, 26, 11);
pads(249, 540, 1, 2, 1, 26, 11, LIGHT, GREEN);
pads(314, 640, 1, 1, 1, 1, 9, '#9cc8ff');
trace('M312 640H320V668', 3);
[530, 672, 730].forEach(y => rect(450, y, 30, 30, LIGHT));
rect(450, 527, 30, 3, GREEN);

// area under the zoom frame
shape('M625 545Q640 530 662 532Q684 540 684 560V595L715 625H800V637H695L655 600H625Q600 620 583 608L585 585L555 562L530 580V600H516V575L550 545L575 540L600 562z');
out += '<g fill="#0020ff"><rect x="702" y="532" width="34" height="42" rx="10"/><rect x="540" y="576" width="27" height="50" rx="12"/><rect x="505" y="618" width="26" height="42" rx="10"/><rect x="568" y="765" width="28" height="80" rx="14"/><rect x="600" y="768" width="36" height="80" rx="14"/></g>';
shape('M540 650L560 640L578 660V690L560 700L575 720V735H560L538 700z');
trace('M575 745L553 765V840M708 840V785L800 690M682 765V830', 10);
trace('M648 765V830', 3);
circle(736, 810, 17, BLUE);
pads(573, 552, 2, 1, 27, 1, 13, LIGHT, '#186830');
pads(660, 549, 2, 1, 60, 1, 11, '#9cc8ff');
pads(554, 590, 1, 3, 1, 27, 14);
pads(522, 604, 1, 2, 1, 27, 11);
pads(606, 602, 1, 1, 1, 1, 11);
pads(594, 671, 1, 2, 1, 27, 14, LIGHT, GREEN);
pads(574, 734, 2, 2, 20, 13, 9, LIGHT, GREEN);
pads(628, 734, 3, 2, 18, 15, 9, LIGHT, GREEN);
pads(635, 700, 2, 1, 42, 1, 8, '#bdb5ff');
rect(654, 763, 22, 11, LIGHT);
rect(654, 784, 22, 11, LIGHT);
pads(554, 790, 1, 2, 1, 28, 11);
pads(590, 788, 2, 1, 24, 1, 9, '#9cc8ff');
pads(595, 828, 2, 1, 27, 1, 12);
pads(678, 810, 1, 1, 1, 1, 12);
pads(736, 810, 1, 1, 1, 1, 12, LIGHT, GREEN);
shape('M135 822H175V832H135zM200 813H335L348 825V835H188V825z');
trace('M580 640H716V754H580zM580 640L188 832M716 640L992 832M580 754L538 832M716 754L746 832', 3, '#fff');
close();

// upper right, four edge connectors
open(450, 120);
vias(20, 380, 760, 130, 46);
vias(60, 520, 340, 90, 26);
vias(80, 640, 120, 190, 20);
vias(280, 620, 260, 70, 24);
pads(33, 102, 7, 3, 20, 11, 6, DARK);
pads(273, 102, 8, 3, 20, 11, 6, DARK);
pads(474, 102, 8, 3, 20, 11, 6, DARK);
pads(678, 102, 6, 3, 20, 11, 6, DARK);
circle(220, 153, 32, LIGHT);
trace('M42 165L108 236V455L135 480H158M84 165V185L131 228V440L160 465L175 460L190 488H160M124 165L219 265V375L205 388H192', 11);
trace('M295 165L303 180V462L335 494H378M336 165V240L320 260V455L345 480L375 482M375 165V225L411 262V370L384 397', 11);
trace('M498 165V215L484 235V265L446 310V430L500 480L550 488M537 165V215L496 258V275L467 310V420L510 460L548 468M578 165V375L560 388', 11);
trace('M699 165V200L651 246V440L690 478L740 488M739 165V200L687 252V440L705 460L740 466M780 165V360L750 388', 11);
[[155, 277, 192, 267], [342, 285, 378, 275], [514, 275, 550, 267], [706, 275, 742, 267]].forEach((p, i) => {
    const ring = i > 1 ? GREEN : '#186860';
    pads(p[0], p[1], 1, 11, 1, 20, 10, '#84c6f0', ring);
    pads(p[2], p[3], 1, 12, 1, 20, 10, '#84c6f0', ring);
    trace(`M${p[0] + 8} 380L${p[0] + 20} 370V350L${p[2] - 4} 335M${p[0] + 8} 385L${p[2] - 8} 405`, 2);
});
[[42, 6], [295, 6], [498, 6], [699, 5]].forEach(p => pads(p[0], 159, p[1], 1, 21, 1, 9, '#9cd0f0', '#186830'));
[[18, 219], [48, 220], [288, 225], [318, 226], [441, 261], [468, 262], [636, 258], [665, 259]].forEach(p => pads(p[0], p[1], 1, 1, 1, 1, 10, '#84c6ff'));
[[89, 373], [288, 372], [483, 372], [669, 375], [125, 568], [163, 618], [144, 704], [148, 830]].forEach(p => pads(p[0], p[1], 1, 1, 1, 1, 8, '#9cb5ff'));
trace('M0 230L35 262V420L52 440M0 530L60 590V622L78 640H175M0 695H70L165 775V830M58 745H130M212 522V590', 3);
trace('M78 350L60 370V520L50 535', 9);
shape('M42 538V522L55 512L64 520V540z');
trace('M0 630H50', 10);
trace('M0 735L30 705H70', 8);
trace('M0 192H44', 5);
bundle('M203 850V600', 3, 2);
bundle('M235 608H380L610 830', 5, 2);
trace('M240 622H380L590 838', 8);
bundle('M235 690H420L590 870', 4, 2);
trace('M245 700H415L450 735', 12);
bundle('M425 705L560 870', 5, 2);
bundle('M480 730L620 870', 6, 2);
trace('M303 870V740L325 712M322 870V755L335 735', 14);
bundle('M405 720V780L380 830M418 720V780V830', 2, 2);
bundle('M237 870V760', 4, 2);
pads(205, 636, 6, 2, 10, 16, 6, '#84c6ff');
pads(345, 575, 3, 2, 10, 14, 8, '#60c0c0', GREEN);
pads(447, 547, 3, 2, 10, 14, 7, LIGHT, '#186830');
pads(622, 548, 3, 2, 9, 14, 7, LIGHT, '#186830');
pads(508, 615, 3, 2, 9, 14, 7, LIGHT);
trace('M420 545H440M418 553H440M592 546H615M592 556H615M530 613H560M530 623H555M762 546H785M762 556H785', 4);
bundle('M563 552V655', 2, 2);
bundle('M587 570V650L690 745V870', 5, 2);
bundle('M540 670L660 790V870', 6, 2);
bundle('M600 670L700 770V870', 5, 2);
bundle('M670 620V710L690 740', 2, 2);
bundle('M742 558V870', 4, 2);
bundle('M758 570V700L770 740V870', 3, 2);
trace('M742 670V800', 24);
trace('M655 780V870M675 800V870M705 750V870M730 800V870', 13);
bundle('M775 715V790L720 850', 4, 2);
trace('M508 830V870', 28);
close();

// lower right
open(600, 400);
vias(50, 100, 60, 200, 20);
vias(120, 60, 220, 300, 46);
vias(60, 650, 280, 250, 60);
rect(45, 0, 28, 62);
bundle('M330 0V170', 3, 2);
bundle('M290 100V230M258 120V200', 2, 2);
bundle('M155 150L175 200V380L110 460', 3, 2);
bundle('M160 40L258 130V220', 2, 2);
bundle('M200 60L235 20L300 0M215 70L280 20', 5, 2);
trace('M60 250V620', 34);
trace('M135 0V190', 46);
trace('M115 130V200L105 260', 28);
bundle('M100 0V40L105 90V180', 3, 2);
bundle('M215 180V600', 4, 2);
bundle('M205 210V560', 3, 2);
bundle('M225 250L245 290V430M258 280V430', 4, 2);
trace('M258 300V420', 12);
bundle('M150 320H125V350L60 410', 4, 2);
trace('M90 380V440L75 465', 36);
bundle('M50 500L105 450V380L155 345', 4, 2);
bundle('M122 455V600', 4, 2);
trace('M122 500V590', 22);
bundle('M45 650L130 585L200 530V490', 6, 2);
bundle('M45 735L75 690L130 660H145L200 605', 3, 2);
bundle('M240 470V600M235 615V780', 3, 2);
bundle('M190 640V760M205 640V740', 3, 2);
bundle('M345 360L265 435V520L245 560', 2, 2);
bundle('M320 180V340L290 365', 1, 2);
bundle('M345 430L310 470V530L280 560', 2, 2);
bundle('M300 545L345 590M290 590V610L335 650V800', 3, 2);
bundle('M130 720L120 740L155 785V860', 3, 2);
bundle('M155 870H215L280 820V720L300 710', 5, 2);
bundle('M180 885L260 860L345 780', 3, 2);
bundle('M175 740L200 770V800', 2, 2);
trace('M85 820L80 870L98 890L45 965M75 880L45 910M345 910L325 930V955L310 966H290L283 955', 10);
pads(78, 114, 1, 2, 1, 26, 12);
pads(50, 165, 3, 3, 15, 26, 9, LIGHT, '#186830');
pads(65, 238, 2, 2, 14, 18, 10, LIGHT, '#186830');
[[176, 117], [192, 117], [221, 132], [235, 132], [204, 627], [219, 627]].forEach(p => pads(p[0], p[1], 1, 1, 1, 1, 11));
[[301, 93], [192, 168], [190, 237], [236, 255], [143, 483], [143, 546], [315, 600]].forEach(p => pads(p[0], p[1], 1, 2, 1, 15, 10, '#60c8c8', GREEN));
pads(309, 264, 3, 2, 19, 16, 10, LIGHT, GREEN);
pads(160, 446, 2, 2, 18, 16, 10, LIGHT, GREEN);
pads(275, 443, 2, 2, 19, 16, 10, LIGHT, GREEN);
pads(325, 513, 1, 2, 1, 26, 14);
pads(288, 375, 1, 1, 1, 1, 9, '#9cc8ff');
pads(50, 715, 1, 2, 1, 16, 12, LIGHT, GREEN);
pads(135, 716, 2, 2, 14, 13, 6);
pads(308, 720, 2, 2, 14, 13, 6);
pads(62, 792, 3, 2, 10, 12, 6);
pads(240, 790, 3, 2, 9, 12, 6);
pads(50, 824, 2, 4, 13, 18, 10, LIGHT, GREEN);
pads(297, 823, 3, 2, 18, 15, 10, LIGHT, GREEN);
pads(294, 863, 3, 2, 19, 15, 10, LIGHT, GREEN);
pads(112, 931, 13, 2, 16, 15, 10, '#9cc8ff', GREEN);
trace('M-1150 993H350M-1150 1032H350', 5, GREEN);
out += '<g transform="translate(0 945)"><rect x="45" y="57" width="302" height="23" fill="url(#strip)"/></g>';
close();

out += '<path d="M197 744h5M207 752v3" stroke="#fff"/>';
board.innerHTML = out;
```
